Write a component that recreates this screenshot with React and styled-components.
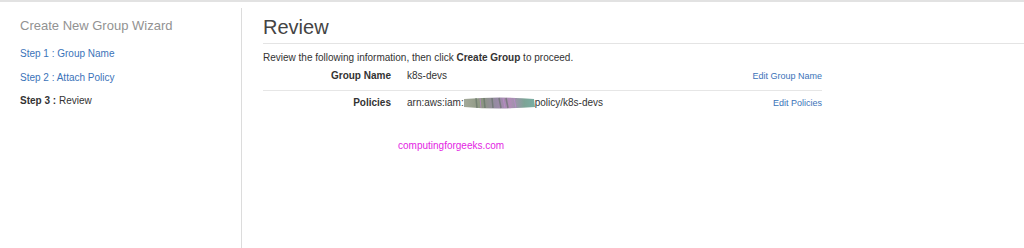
import React from "react";
import styled, { createGlobalStyle } from "styled-components";

const Global = createGlobalStyle`
  html, body { margin: 0; padding: 0; background: #fff; }
  body { font-family: "Liberation Sans", Arial, sans-serif; }
`;

const Page = styled.div`
  width: 1024px;
  height: 248px;
  box-sizing: border-box;
  border-top: 2px solid #e2e2e2;
  display: flex;
  overflow: hidden;
`;

const Sidebar = styled.nav`
  width: 241px;
  flex: none;
  box-sizing: border-box;
  padding: 15px 0 0 20px;
  display: flex;
  flex-direction: column;
`;

const Divider = styled.div`
  width: 1px;
  margin-top: 6px;
  background: #dcdcdc;
  flex: none;
`;

const WizardTitle = styled.div`
  font-size: 13px;
  color: #929292;
  line-height: 18px;
  margin-bottom: 13px;
`;

const Step = styled.div`
  font-size: 10px;
  line-height: 12px;
  margin-bottom: 11.5px;
  color: ${(p) => (p.$active ? "#333" : "#3b73b9")};
  b { font-weight: bold; }
`;

const Main = styled.main`
  flex: 1;
  padding: 12px 0 0 21px;
  display: flex;
  flex-direction: column;
`;

const Heading = styled.h1`
  margin: 0;
  font-size: 20px;
  font-weight: normal;
  color: #444;
  line-height: 26px;
  padding-bottom: 3px;
  border-bottom: 1px solid #e4e4e4;
`;

const Intro = styled.p`
  margin: 7px 0 0;
  font-size: 10px;
  line-height: 14px;
  color: #333;
  b { font-weight: bold; }
`;

const Table = styled.div`
  width: 559px;
  display: flex;
  flex-direction: column;
`;

const Row = styled.div`
  display: grid;
  grid-template-columns: 128px 1fr auto;
  column-gap: 16px;
  align-items: center;
  align-content: start;
  box-sizing: border-box;
  height: ${(p) => p.$h}px;
  padding-top: 5px;
  line-height: 12px;
  border-bottom: ${(p) => (p.$line ? "1px solid #e6e6e6" : "none")};
  font-size: 10px;
  color: #333;
`;

const Label = styled.span`
  text-align: right;
  font-weight: bold;
  color: #333;
`;

const Value = styled.span`
  display: flex;
  align-items: center;
  white-space: nowrap;
`;

const EditLink = styled.a`
  font-size: 9px;
  color: #3b73b9;
  text-decoration: none;
`;

const Watermark = styled.div`
  margin: 25px 0 0 135px;
  font-size: 10px;
  color: #e31ee3;
`;

const Smudge = () => (
  <svg width="71" height="14" viewBox="0 0 71 14" style={{ display: "block" }}>
    <defs>
      <linearGradient id="sg" x1="0" x2="1" y1="0" y2="0">
        <stop offset="0" stopColor="#9aa08f" />
        <stop offset="0.25" stopColor="#7e8a72" />
        <stop offset="0.45" stopColor="#8a7d9a" />
        <stop offset="0.65" stopColor="#a77fae" />
        <stop offset="0.85" stopColor="#6e9a8a" />
        <stop offset="1" stopColor="#6aa59a" />
      </linearGradient>
    </defs>
    <path d="M0 3 Q36 0 70 3 L71 11 Q36 14 0 11 Z" fill="url(#sg)" opacity="0.9" />
    <g stroke="#5f6f63" strokeWidth="1.5" opacity="0.6">
      <line x1="12" y1="2" x2="13" y2="12" />
      <line x1="20" y1="2" x2="21" y2="12" />
      <line x1="28" y1="2" x2="29" y2="12" />
      <line x1="35" y1="2" x2="37" y2="12" />
      <line x1="42" y1="2" x2="44" y2="12" />
    </g>
    <g stroke="#c08ad0" strokeWidth="1" opacity="0.7">
      <line x1="16" y1="2" x2="17" y2="12" />
      <line x1="39" y1="2" x2="41" y2="12" />
      <line x1="50" y1="2" x2="52" y2="12" />
    </g>
  </svg>
);

export default function App() {
  return (
    <>
      <Global />
      <Page>
        <Sidebar>
          <WizardTitle>Create New Group Wizard</WizardTitle>
          <Step>Step 1 : Group Name</Step>
          <Step>Step 2 : Attach Policy</Step>
          <Step $active>
            <b>Step 3 :</b> Review
          </Step>
        </Sidebar>
        <Divider />
        <Main>
          <Heading>Review</Heading>
          <Intro>
            Review the following information, then click <b>Create Group</b> to proceed.
          </Intro>
          <Table>
            <Row $h={26} $line>
              <Label>Group Name</Label>
              <Value>k8s-devs</Value>
              <EditLink href="#">Edit Group Name</EditLink>
            </Row>
            <Row $h={24}>
              <Label>Policies</Label>
              <Value>
                arn:aws:iam:
                <Smudge />
                policy/k8s-devs
              </Value>
              <EditLink href="#">Edit Policies</EditLink>
            </Row>
          </Table>
          <Watermark>computingforgeeks.com</Watermark>
        </Main>
      </Page>
    </>
  );
}
